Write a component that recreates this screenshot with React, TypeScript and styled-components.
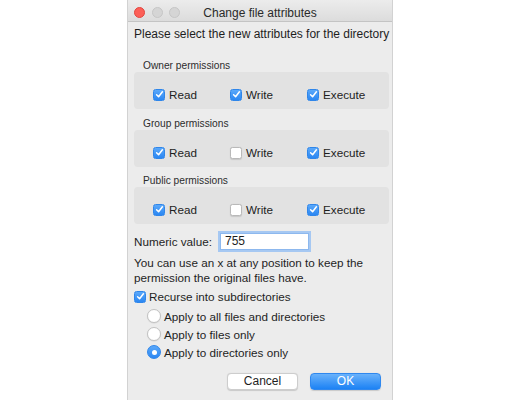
import styled, { createGlobalStyle } from "styled-components";

const Global = createGlobalStyle`
  html, body {
    margin: 0;
    padding: 0;
    background: #ffffff;
    font-family: "Liberation Sans", Arial, sans-serif;
    color: #1e1e1e;
  }
`;

const Page = styled.div`
  display: flex;
  justify-content: center;
  height: 400px;
  overflow: hidden;
`;

const Window = styled.div`
  width: 264px;
  height: 400px;
  background: #ececec;
  border-left: 1px solid #d2d2d2;
  border-right: 1px solid #d2d2d2;
  display: flex;
  flex-direction: column;
`;

const TitleBar = styled.div`
  height: 21px;
  border-bottom: 1px solid #c4c4c4;
  background: linear-gradient(#ececec, #dcdcdc);
  display: grid;
  grid-template-columns: 1fr auto 1fr;
  align-items: center;
  padding: 0 6px;
  font-size: 12px;
  color: #2a2a2a;
`;

const Lights = styled.div`
  display: flex;
  gap: 6.5px;
  padding-top: 4px;
`;

const Light = styled.span<{ $color: string; $edge: string }>`
  width: 11px;
  height: 11px;
  border-radius: 50%;
  box-sizing: border-box;
  background: ${(p) => p.$color};
  border: 0.5px solid ${(p) => p.$edge};
`;

const Title = styled.div`
  padding-top: 4px;
`;

/* 본문 */
const Body = styled.div`
  display: flex;
  flex-direction: column;
  padding: 0 3px 0 6px;
  font-size: 11.7px;
`;

const Intro = styled.p`
  margin: 5px 0 0;
  font-size: 12px;
  line-height: 15px;
  white-space: nowrap;
  letter-spacing: -0.02px;
`;

const GroupLabel = styled.div<{ $gap: number }>`
  margin-top: ${(p) => p.$gap}px;
  padding-left: 9px;
  font-size: 10.2px;
  line-height: 12px;
  color: #2c2c2c;
`;

const GroupBox = styled.div`
  background: #e2e2e2;
  border-radius: 4px;
  padding: 16px 0 8px 19px;
  display: grid;
  grid-template-columns: 77px 77px 77px;
`;

const CheckRow = styled.label`
  display: flex;
  align-items: center;
  gap: 4px;
  height: 13px;
  line-height: 13px;
  white-space: nowrap;
`;

const Box = styled.span<{ $on: boolean }>`
  width: 12px;
  height: 12px;
  box-sizing: border-box;
  border-radius: 2.5px;
  flex-shrink: 0;
  display: flex;
  align-items: center;
  justify-content: center;
  background: ${(p) =>
    p.$on ? "linear-gradient(#5aa8fa, #2b87f2)" : "#ffffff"};
  border: 1px solid ${(p) => (p.$on ? "#2f86ea" : "#b9b9b9")};
  box-shadow: ${(p) => (p.$on ? "none" : "0 0.5px 1px rgba(0,0,0,0.12)")};
`;

const NumericRow = styled.div`
  display: flex;
  align-items: center;
  gap: 6px;
  margin-top: 7px;
`;

const NumInput = styled.div`
  width: 83px;
  height: 15px;
  background: #ffffff;
  border: 1px solid #8db8ee;
  box-shadow: 0 0 0 2px #a6c8f2;
  margin: 2px 0 2px 2px;
  padding: 0 0 0 4px;
  line-height: 15px;
  font-size: 12px;
`;

const Help = styled.p`
  margin: 3px 0 0;
  line-height: 15px;
`;

const RecurseRow = styled(CheckRow)`
  margin-top: 4px;
  height: 15px;
  gap: 3px;
`;

const RadioList = styled.div`
  display: flex;
  flex-direction: column;
  margin-top: 3px;
  padding-left: 13px;
`;

const RadioRow = styled.label`
  display: flex;
  align-items: center;
  gap: 3px;
  height: 18px;
`;

const Radio = styled.span<{ $on: boolean }>`
  width: 14px;
  height: 14px;
  box-sizing: border-box;
  border-radius: 50%;
  display: flex;
  align-items: center;
  justify-content: center;
  background: ${(p) => (p.$on ? "linear-gradient(#5aa8fa, #2b87f2)" : "#ffffff")};
  border: 1px solid ${(p) => (p.$on ? "#2f86ea" : "#c2c2c2")};
  box-shadow: ${(p) => (p.$on ? "none" : "0 0.5px 1px rgba(0,0,0,0.1)")};

  &::after {
    content: "";
    display: ${(p) => (p.$on ? "block" : "none")};
    width: 5px;
    height: 5px;
    border-radius: 50%;
    background: #ffffff;
  }
`;

const ButtonRow = styled.div`
  display: flex;
  justify-content: flex-end;
  gap: 12px;
  margin-top: 12px;
  padding-right: 8px;
`;

const Button = styled.button<{ $primary?: boolean }>`
  width: 71px;
  height: 17px;
  padding: 0;
  border-radius: 4px;
  font-family: inherit;
  font-size: 12px;
  line-height: 15px;
  cursor: pointer;
  color: ${(p) => (p.$primary ? "#ffffff" : "#1e1e1e")};
  background: ${(p) =>
    p.$primary ? "linear-gradient(#6ab2fb, #1c82f4)" : "#ffffff"};
  border: 1px solid ${(p) => (p.$primary ? "#2f88ef" : "#cdcdcd")};
  box-shadow: 0 0.5px 1px rgba(0, 0, 0, 0.15);
`;

function Check({ on }: { on: boolean }) {
  return (
    <Box $on={on}>
      {on && (
        <svg width="9" height="9" viewBox="0 0 9 9">
          <path
            d="M1.6 4.8 L3.6 6.8 L7.4 1.8"
            fill="none"
            stroke="#fff"
            strokeWidth="1.5"
            strokeLinecap="round"
            strokeLinejoin="round"
          />
        </svg>
      )}
    </Box>
  );
}

type Perm = { label: string; gap: number; read: boolean; write: boolean; exec: boolean };

const perms: Perm[] = [
  { label: "Owner permissions", gap: 18, read: true, write: true, exec: true },
  { label: "Group permissions", gap: 9, read: true, write: false, exec: true },
  { label: "Public permissions", gap: 8, read: true, write: false, exec: true },
];

export default function App() {
  return (
    <>
      <Global />
      <Page>
        <Window>
          <TitleBar>
            <Lights>
              <Light $color="#fc5f57" $edge="#e2463f" />
              <Light $color="#d5d5d5" $edge="#c6c6c6" />
              <Light $color="#d5d5d5" $edge="#c6c6c6" />
            </Lights>
            <Title>Change file attributes</Title>
            <div />
          </TitleBar>
          <Body>
            <Intro>Please select the new attributes for the directory</Intro>
            {perms.map((p) => (
              <div key={p.label}>
                <GroupLabel $gap={p.gap}>{p.label}</GroupLabel>
                <GroupBox>
                  <CheckRow>
                    <Check on={p.read} />
                    Read
                  </CheckRow>
                  <CheckRow>
                    <Check on={p.write} />
                    Write
                  </CheckRow>
                  <CheckRow>
                    <Check on={p.exec} />
                    Execute
                  </CheckRow>
                </GroupBox>
              </div>
            ))}
            <NumericRow>
              Numeric value:
              <NumInput>755</NumInput>
            </NumericRow>
            <Help>
              You can use an x at any position to keep the
              <br />
              permission the original files have.
            </Help>
            <RecurseRow>
              <Check on={true} />
              Recurse into subdirectories
            </RecurseRow>
            <RadioList>
              <RadioRow>
                <Radio $on={false} />
                Apply to all files and directories
              </RadioRow>
              <RadioRow>
                <Radio $on={false} />
                Apply to files only
              </RadioRow>
              <RadioRow>
                <Radio $on={true} />
                Apply to directories only
              </RadioRow>
            </RadioList>
            <ButtonRow>
              <Button>Cancel</Button>
              <Button $primary>OK</Button>
            </ButtonRow>
          </Body>
        </Window>
      </Page>
    </>
  );
}
